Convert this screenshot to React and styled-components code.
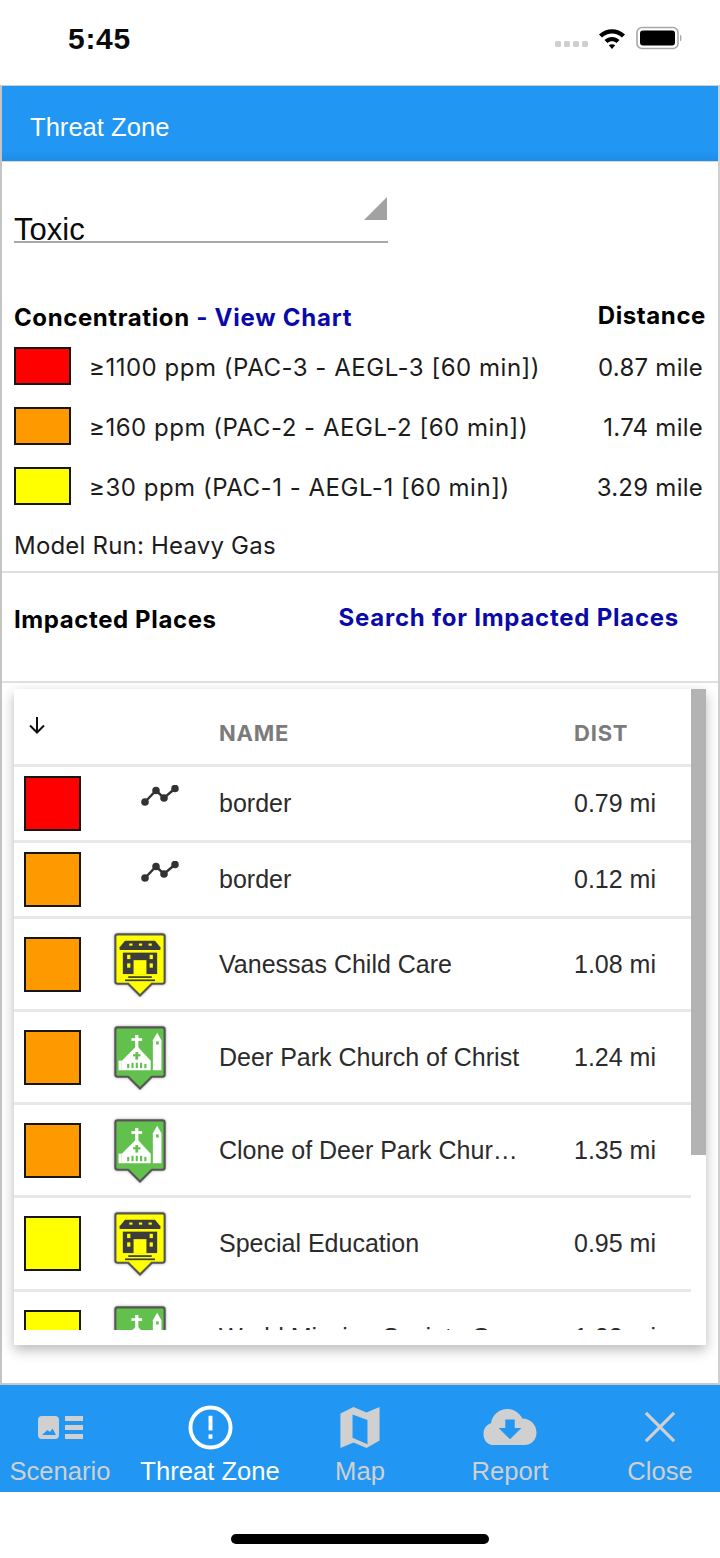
import React from "react";
import styled, { createGlobalStyle } from "styled-components";

const GlobalStyle = createGlobalStyle`
  html, body {
    margin: 0;
    padding: 0;
    background: #fff;
    font-family: "Liberation Sans", Arial, sans-serif;
  }
`;

const systemFont = `Inter, "Liberation Sans", sans-serif`;

const Page = styled.div`
  width: 720px;
  height: 1558px;
  display: flex;
  flex-direction: column;
  overflow: hidden;
  background: #fff;
`;

const StatusBar = styled.div`
  height: 85px;
  flex: none;
  display: flex;
  align-items: flex-start;
  justify-content: space-between;
  padding: 23px 37px 0 68px;
  box-sizing: border-box;
`;

const Clock = styled.div`
  font-size: 30px;
  line-height: 32px;
  font-weight: 700;
  color: #0a0a0a;
  letter-spacing: 0.7px;
`;

const StatusIcons = styled.div`
  display: flex;
  align-items: center;
  gap: 10px;
  height: 30px;
`;

const Frame = styled.div`
  height: 1300px;
  flex: none;
  display: flex;
  flex-direction: column;
  box-sizing: border-box;
  border: 1px solid #cfcfcf;
  border-left: 2px solid #c4c4c4;
  border-right: 2px solid #d0d0d0;
  border-bottom: 2px solid #c8c8c8;
`;

const Header = styled.div`
  height: 75px;
  flex: none;
  background: linear-gradient(#2196f3 88%, #1e8de6);
  color: #fff;
  font-size: 25.6px;
  line-height: 82px;
  padding-left: 28px;
  border-bottom: 1px solid #d8d8d8;
`;

const Body = styled.div`
  flex: 1;
  display: flex;
  flex-direction: column;
  padding: 0 12px;
  min-height: 0;
`;

const SelectBox = styled.div`
  width: 374px;
  height: 81px;
  flex: none;
  box-sizing: border-box;
  border-bottom: 2px solid #a8a8a8;
  display: flex;
  align-items: flex-end;
  justify-content: space-between;
  font-size: 31px;
  line-height: 22px;
  color: #0a0a0a;
  margin-bottom: 58px;
`;

const Caret = styled.div`
  width: 0;
  height: 0;
  border-left: 23px solid transparent;
  border-bottom: 23px solid #a2a2a2;
  margin: 0 1px 21px 0;
`;

const ConcHead = styled.div`
  display: flex;
  justify-content: space-between;
  align-items: center;
  height: 26px;
  margin-top: 3px;
  margin-bottom: 17px;
`;

const Bold = styled.span`
  font-family: ${systemFont};
  font-size: 24px;
  font-weight: 700;
  color: #000;
  letter-spacing: 0.6px;
  margin: ${(p) => p.$margin || 0};
`;

const LinkText = styled.span`
  font-family: ${systemFont};
  font-size: 24px;
  font-weight: 700;
  color: #0a0aa8;
  letter-spacing: 0.75px;
`;

const ConcRow = styled.div`
  display: flex;
  align-items: center;
  height: 38px;
  margin-bottom: 22px;
  font-family: ${systemFont};
  font-size: 24px;
  color: #1c1c1c;
`;

const Swatch = styled.div`
  width: ${(p) => p.$w}px;
  height: ${(p) => p.$h}px;
  flex: none;
  box-sizing: border-box;
  border: 2px solid #161616;
  background: ${(p) => p.$color};
`;

const ConcLabel = styled.div`
  flex: 1;
  margin: 3px 0 0 18px;
  letter-spacing: 0.52px;
`;

const ConcDist = styled.div`
  margin-top: 3px;
  padding-right: 3px;
  letter-spacing: 0.25px;
`;

const ModelRun = styled.div`
  font-family: ${systemFont};
  font-size: 24px;
  line-height: 28px;
  color: #1c1c1c;
  letter-spacing: 0.2px;
  margin-top: 5px;
  margin-bottom: 11px;
`;

const Divider = styled.div`
  height: 2px;
  flex: none;
  background: #e0e0e0;
  margin: 0 -12px;
`;

const PlacesRow = styled.div`
  height: 108px;
  flex: none;
  box-sizing: border-box;
  display: flex;
  align-items: center;
  justify-content: space-between;
  padding: 0 27px 20px 0;
`;

const Card = styled.div`
  width: 692px;
  height: 656px;
  flex: none;
  margin-top: 6px;
  background: #fff;
  box-shadow: 0 5px 12px rgba(0, 0, 0, 0.28);
  position: relative;
`;

const TableClip = styled.div`
  height: 641px;
  overflow: hidden;
`;

const Scrollbar = styled.div`
  position: absolute;
  right: 0;
  top: 0;
  width: 15px;
  height: 466px;
  background: #b3b3b3;
`;

const Row = styled.div`
  display: grid;
  grid-template-columns: 205px 355px 1fr;
  width: 677px;
  height: ${(p) => p.$h}px;
  box-sizing: border-box;
  border-bottom: 3px solid #e8e8e8;
  align-items: center;
  font-size: 25px;
  color: #2b2b2b;
`;

const ThCell = styled.div`
  font-family: ${systemFont};
  font-size: 22px;
  font-weight: 700;
  color: #7b7b7b;
  letter-spacing: 0.8px;
  padding-top: 12px;
`;

const SortCell = styled.div`
  padding-left: 13px;
`;

const MarkCell = styled.div`
  display: flex;
  align-items: center;
  padding-left: 10px;
`;

const IconSlot = styled.div`
  width: 118px;
  box-sizing: border-box;
  display: flex;
  justify-content: center;
  padding: ${(p) => (p.$line ? "0 0 16px 40px" : "2px 0 0")};
`;

const NameCell = styled.div`
  white-space: nowrap;
  overflow: hidden;
  text-overflow: ellipsis;
  padding-right: 50px;
`;

const TabBar = styled.div`
  height: 107px;
  flex: none;
  box-sizing: border-box;
  padding-top: 13px;
  background: #2196f3;
  display: flex;
  justify-content: space-between;
`;

const Tab = styled.div`
  width: 120px;
  display: flex;
  flex-direction: column;
  align-items: center;
  color: ${(p) => (p.$active ? "#fff" : "#d0d0d0")};
  font-size: 25.6px;
  white-space: nowrap;
`;

const TabIcon = styled.div`
  height: 58px;
  display: flex;
  align-items: center;
  justify-content: center;
`;

const TabLabel = styled.div`
  line-height: 30px;
`;

const HomeArea = styled.div`
  flex: 1;
  display: flex;
  justify-content: center;
  padding-top: 42px;
`;

const HomeBar = styled.div`
  width: 258px;
  height: 10px;
  border-radius: 5px;
  background: #000;
`;

const SignalDots = () => (
  <svg width="33" height="22" viewBox="0 0 33 22">
    {[0, 9, 18, 27].map((x) => (
      <rect key={x} x={x} y="14" width="6" height="6" rx="1.5" fill="#cfcfcf" />
    ))}
  </svg>
);

const Wifi = () => (
  <svg width="28" height="22" viewBox="0 0 28 22">
    <path d="M1 7.5 C8.5 .5 19.5 .5 27 7.5 L24 10.6 C18 5 10 5 4 10.6Z" fill="#000" />
    <path d="M6.5 13 C11 9 17 9 21.5 13 L18.6 16 C15.8 13.6 12.2 13.6 9.4 16Z" fill="#000" />
    <path d="M14 22 L10.8 18.2 C12.8 16.8 15.2 16.8 17.2 18.2Z" fill="#000" />
  </svg>
);

const Battery = () => (
  <svg width="47" height="24" viewBox="0 0 47 24">
    <rect x="1" y="1.5" width="41" height="21" rx="5" fill="none" stroke="#a8a8a8" strokeWidth="1.6" />
    <rect x="4" y="4.5" width="35" height="15" rx="3" fill="#000" />
    <path d="M44 8.5 C46 9.5 46 14.5 44 15.5Z" fill="#a8a8a8" />
  </svg>
);

const SortArrow = () => (
  <svg width="20" height="20" viewBox="0 0 20 20" fill="none" stroke="#111" strokeWidth="2">
    <path d="M10 2 V17 M3 10.5 L10 17.5 L17 10.5" />
  </svg>
);

const LineIcon = () => (
  <svg width="38" height="22" viewBox="0 0 38 22" fill="#333" stroke="#333" strokeWidth="2.4">
    <path d="M4 17 L15 5.5 L23 13 L34 3.5" fill="none" />
    <circle cx="4" cy="17" r="2.6" />
    <circle cx="15" cy="5.5" r="2.6" />
    <circle cx="23" cy="13" r="2.6" />
    <circle cx="34" cy="3.5" r="2.6" />
  </svg>
);

const PinShape = ({ fill }) => (
  <path
    d="M4 2 H46 Q48 2 48 4 V46 Q48 48 46 48 H36 L25 59 L14 48 H4 Q2 48 2 46 V4 Q2 2 4 2Z"
    fill={fill}
    stroke="#555"
    strokeWidth="2"
    filter="url(#pinBlur)"
  />
);

const SchoolPin = () => (
  <svg width="60" height="73" viewBox="-3 -3 56 68">
    <defs>
      <filter id="pinBlur" x="-20%" y="-20%" width="140%" height="140%">
        <feDropShadow dx="0" dy="0" stdDeviation="1.6" floodColor="#000" floodOpacity="0.35" />
      </filter>
    </defs>
    <PinShape fill="#ffff00" />
    <g fill="#3c3c3c">
      <path d="M11 8 H39 L44 14 V16.5 H6 V14Z" />
      <rect x="9" y="19" width="32" height="20" />
      <rect x="15" y="10.5" width="3" height="2" fill="#ffff00" />
      <rect x="24" y="10.5" width="3" height="2" fill="#ffff00" />
      <rect x="33" y="10.5" width="3" height="2" fill="#ffff00" />
      <rect x="13" y="21" width="3" height="4" fill="#ffff00" />
      <rect x="34" y="21" width="3" height="4" fill="#ffff00" />
      <rect x="13" y="29" width="3" height="4" fill="#ffff00" />
      <rect x="34" y="29" width="3" height="4" fill="#ffff00" />
      <rect x="19" y="26" width="12" height="13" fill="#ffff00" />
      <rect x="14" y="41" width="22" height="1.6" />
      <rect x="11" y="44" width="28" height="1.6" />
    </g>
  </svg>
);

const ChurchPin = () => (
  <svg width="60" height="73" viewBox="-3 -3 56 68">
    <PinShape fill="#62c14d" />
    <g fill="#fff">
      <rect x="20.5" y="9" width="3" height="13" />
      <rect x="17" y="12" width="10" height="2.6" />
      <path d="M22 19 L35 33 V42 H8 V33Z" />
      <path d="M37 14 L41 7 L45 14 V42 H37Z" />
      <rect x="5" y="33" width="3" height="9" />
    </g>
    <g fill="#62c14d">
      <rect x="20.7" y="25" width="2.6" height="7" />
      <rect x="18.5" y="27" width="7" height="2" />
      <rect x="13" y="36" width="2" height="4" />
      <rect x="17" y="35" width="2" height="5" />
      <rect x="21" y="35" width="2" height="5" />
      <rect x="25" y="35" width="2" height="5" />
      <rect x="29" y="36" width="2" height="4" />
      <rect x="40" y="15" width="2.4" height="3" />
    </g>
  </svg>
);

const ScenarioIcon = () => (
  <svg width="45" height="23" viewBox="0 0 45 23" fill="#d0d0d0">
    <path
      fillRule="evenodd"
      d="M4 0 H17 Q21 0 21 4 V19 Q21 23 17 23 H4 Q0 23 0 19 V4 Q0 0 4 0Z M4 19 H18 L14.5 12.5 L12 16 L9.5 14Z"
    />
    <rect x="27" y="0" width="18" height="5" />
    <rect x="27" y="9" width="18" height="5" />
    <rect x="27" y="18" width="18" height="5" />
  </svg>
);

const AlertIcon = () => (
  <svg width="45" height="45" viewBox="0 0 46 46" fill="none">
    <circle cx="23" cy="23" r="20.5" stroke="#fff" strokeWidth="4" />
    <rect x="21" y="11" width="4" height="15" fill="#fff" />
    <rect x="21" y="30" width="4" height="4.5" fill="#fff" />
  </svg>
);

const MapIcon = () => (
  <svg width="42" height="41" viewBox="0 0 42 44" fill="#d0d0d0">
    <path d="M0 7 L14 0 L28 6 L42 0 V36 L28 44 L14 38 L0 44Z M13 8 V33 L29 40 V14Z" fillRule="evenodd" />
  </svg>
);

const CloudIcon = () => (
  <svg width="54" height="36" viewBox="0 0 56 38" fill="#d0d0d0">
    <path
      fillRule="evenodd"
      d="M11 38 C4 38 0 33 0 26 C0 20 4 16 8 15 C9 6 17 0 25 0 C32 0 38 4 41 10 C50 10 56 17 56 25 C56 33 50 38 43 38Z M23 11 V20 H16 L28 32 L40 20 H33 V11Z"
    />
  </svg>
);

const CloseIcon = () => (
  <svg width="32" height="32" viewBox="0 0 34 34" stroke="#d0d0d0" strokeWidth="3.4" fill="none">
    <path d="M2 2 L32 32 M32 2 L2 32" />
  </svg>
);

const concentrations = [
  { color: "#ff0000", label: "≥1100 ppm (PAC-3 - AEGL-3 [60 min])", dist: "0.87 mile" },
  { color: "#ff9900", label: "≥160 ppm (PAC-2 - AEGL-2 [60 min])", dist: "1.74 mile" },
  { color: "#ffff00", label: "≥30 ppm (PAC-1 - AEGL-1 [60 min])", dist: "3.29 mile" },
];

const places = [
  { color: "#ff0000", kind: "line", name: "border", dist: "0.79 mi", h: 76 },
  { color: "#ff9900", kind: "line", name: "border", dist: "0.12 mi", h: 76 },
  { color: "#ff9900", kind: "school", name: "Vanessas Child Care", dist: "1.08 mi", h: 93 },
  { color: "#ff9900", kind: "church", name: "Deer Park Church of Christ", dist: "1.24 mi", h: 93 },
  { color: "#ff9900", kind: "church", name: "Clone of Deer Park Church of Christ", dist: "1.35 mi", h: 93 },
  { color: "#ffff00", kind: "school", name: "Special Education", dist: "0.95 mi", h: 94 },
  { color: "#ffff00", kind: "church", name: "World Mission Society Church", dist: "1.22 mi", h: 93 },
];

const tabs = [
  { label: "Scenario", icon: <ScenarioIcon /> },
  { label: "Threat Zone", icon: <AlertIcon />, active: true },
  { label: "Map", icon: <MapIcon /> },
  { label: "Report", icon: <CloudIcon /> },
  { label: "Close", icon: <CloseIcon /> },
];

const placeIcon = (kind) => {
  if (kind === "school") return <SchoolPin />;
  if (kind === "church") return <ChurchPin />;
  return <LineIcon />;
};

export default function App() {
  return (
    <Page>
      <GlobalStyle />
      <StatusBar>
        <Clock>5:45</Clock>
        <StatusIcons>
          <SignalDots />
          <Wifi />
          <Battery />
        </StatusIcons>
      </StatusBar>

      <Frame>
        <Header>Threat Zone</Header>
        <Body>
          <SelectBox>
            <span>Toxic</span>
            <Caret />
          </SelectBox>

          <ConcHead>
            <span>
              <Bold>Concentration</Bold>
              <LinkText> - View Chart</LinkText>
            </span>
            <Bold $margin="0 0 4px">Distance</Bold>
          </ConcHead>

          {concentrations.map((c) => (
            <ConcRow key={c.color}>
              <Swatch $color={c.color} $w={57} $h={38} />
              <ConcLabel>{c.label}</ConcLabel>
              <ConcDist>{c.dist}</ConcDist>
            </ConcRow>
          ))}

          <ModelRun>Model Run: Heavy Gas</ModelRun>
          <Divider />

          <PlacesRow>
            <Bold $margin="4px 0 0">Impacted Places</Bold>
            <LinkText>Search for Impacted Places</LinkText>
          </PlacesRow>
          <Divider />

          <Card>
            <TableClip>
              <Row $h={78}>
                <SortCell>
                  <SortArrow />
                </SortCell>
                <ThCell>NAME</ThCell>
                <ThCell>DIST</ThCell>
              </Row>
              {places.map((p, i) => (
                <Row key={i} $h={p.h}>
                  <MarkCell>
                    <Swatch $color={p.color} $w={57} $h={55} />
                    <IconSlot $line={p.kind === "line"}>{placeIcon(p.kind)}</IconSlot>
                  </MarkCell>
                  <NameCell>{p.name}</NameCell>
                  <div>{p.dist}</div>
                </Row>
              ))}
            </TableClip>
            <Scrollbar />
          </Card>
        </Body>
      </Frame>

      <TabBar>
        {tabs.map((t) => (
          <Tab key={t.label} $active={t.active}>
            <TabIcon>{t.icon}</TabIcon>
            <TabLabel>{t.label}</TabLabel>
          </Tab>
        ))}
      </TabBar>

      <HomeArea>
        <HomeBar />
      </HomeArea>
    </Page>
  );
}
